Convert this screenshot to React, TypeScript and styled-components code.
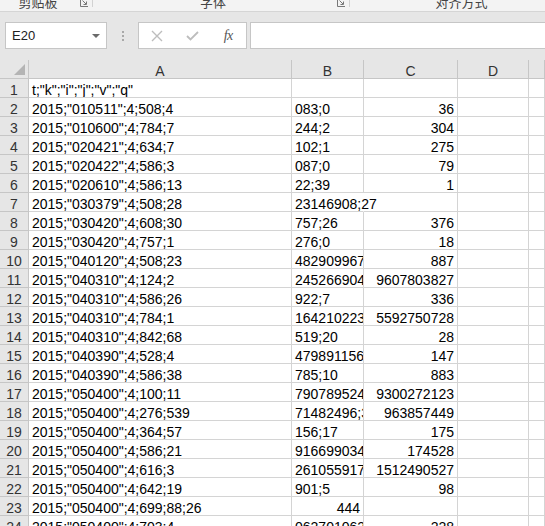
import styled, { createGlobalStyle } from 'styled-components';

const GlobalStyle = createGlobalStyle`
  html, body {
    margin: 0;
    padding: 0;
    background: #ffffff;
    overflow: hidden;
  }
  * {
    box-sizing: border-box;
  }
`;

const COLS = '29px 263px 72px 94px 71px 1fr';
const GRID = '#d4d4d4';
const HEAD_LINE = '#c6c6c6';

const Window = styled.div`
  width: 545px;
  height: 526px;
  overflow: hidden;
  font-family: 'Liberation Sans', Arial, sans-serif;
  color: #000;
`;

const Ribbon = styled.div`
  display: flex;
  height: 12px;
  background: #f3f3f3;
  border-bottom: 1px solid #d5d5d5;
  overflow: hidden;
`;

const Group = styled.div<{ $w: number }>`
  display: flex;
  align-items: flex-end;
  flex: none;
  width: ${(p) => p.$w}px;
  border-right: 1px solid #d2d2d2;
  height: 7px;
  align-self: flex-start;
  overflow: visible;
`;

const GroupLabel = styled.div`
  flex: 1;
  text-align: center;
  font-family: 'Noto Sans CJK SC', 'Liberation Sans', sans-serif;
  font-size: 13px;
  line-height: 13px;
  color: #444;
  margin-bottom: -1px;
  white-space: nowrap;
`;

const Launcher = styled.svg`
  flex: none;
  width: 8px;
  height: 8px;
  margin: 0 4px 0 4px;
`;

const FormulaBand = styled.div`
  display: flex;
  height: 48px;
  padding: 10px 0 11px 5px;
  background: #e6e6e6;
`;

const NameBox = styled.div`
  display: flex;
  align-items: center;
  width: 102px;
  flex: none;
  padding: 0 6px 0 6px;
  background: #fff;
  border: 1px solid #c6c6c6;
  font-size: 13px;
  color: #222;
`;

const Caret = styled.span`
  margin-left: auto;
  width: 0;
  height: 0;
  border-left: 4px solid transparent;
  border-right: 4px solid transparent;
  border-top: 4px solid #6a6a6a;
`;

const Dots = styled.div`
  display: flex;
  flex-direction: column;
  align-items: center;
  justify-content: center;
  gap: 2px;
  width: 31px;
  flex: none;

  span {
    width: 2px;
    height: 2px;
    background: #a8a8a8;
  }
`;

const ButtonBox = styled.div`
  display: flex;
  width: 109px;
  flex: none;
  background: #fff;
  border: 1px solid #c6c6c6;
`;

const Btn = styled.div`
  display: flex;
  align-items: center;
  justify-content: center;
  width: 36px;
  color: #bdbdbd;
`;

const Fx = styled.span`
  font-family: 'Liberation Serif', 'DejaVu Serif', serif;
  font-style: italic;
  font-size: 14px;
  color: #555;
  letter-spacing: -0.5px;
`;

const FormulaInput = styled.div`
  flex: 1;
  margin-left: 3px;
  margin-right: -2px;
  background: #fff;
  border: 1px solid #c6c6c6;
`;

const Row = styled.div`
  display: grid;
  grid-template-columns: ${COLS};
  height: 19px;
`;

const Corner = styled.div`
  display: flex;
  align-items: flex-end;
  justify-content: flex-end;
  padding: 0 3px 3px 0;
  background: #e6e6e6;
  border-right: 1px solid ${HEAD_LINE};
  border-bottom: 1px solid ${HEAD_LINE};
`;

const Triangle = styled.span`
  width: 0;
  height: 0;
  border-left: 11px solid transparent;
  border-bottom: 11px solid #b4b4b4;
`;

const HeadCell = styled.div`
  display: flex;
  align-items: flex-end;
  justify-content: center;
  background: #e6e6e6;
  border-right: 1px solid ${HEAD_LINE};
  border-bottom: 1px solid ${HEAD_LINE};
  font-size: 14px;
  line-height: 14px;
  color: #333;
`;

const RowNum = styled(HeadCell)`
  border-bottom-color: ${HEAD_LINE};
`;

const Cell = styled.div<{ $right?: boolean; $spill?: boolean }>`
  display: flex;
  align-items: flex-end;
  justify-content: ${(p) => (p.$right ? 'flex-end' : 'flex-start')};
  padding: 0 3px;
  border-right: 1px solid ${(p) => (p.$spill ? 'transparent' : GRID)};
  border-bottom: 1px solid ${GRID};
  overflow: ${(p) => (p.$spill ? 'visible' : 'hidden')};
  white-space: nowrap;
  font-size: 14px;
  line-height: 14px;
`;

type Line = { a: string; b?: string; bRight?: boolean; bSpill?: boolean; c?: string };

// B values longer than the column are clipped at its edge, as in the sheet
const rows: Line[] = [
  { a: 't;"k";"i";"j";"v";"q"' },
  { a: '2015;"010511";4;508;4', b: '083;0', c: '36' },
  { a: '2015;"010600";4;784;7', b: '244;2', c: '304' },
  { a: '2015;"020421";4;634;7', b: '102;1', c: '275' },
  { a: '2015;"020422";4;586;3', b: '087;0', c: '79' },
  { a: '2015;"020610";4;586;13', b: '22;39', c: '1' },
  { a: '2015;"030379";4;508;28', b: '23146908;27', bSpill: true },
  { a: '2015;"030420";4;608;30', b: '757;26', c: '376' },
  { a: '2015;"030420";4;757;1', b: '276;0', c: '18' },
  { a: '2015;"040120";4;508;23', b: '482909967', c: '887' },
  { a: '2015;"040310";4;124;2', b: '245266904', c: '9607803827' },
  { a: '2015;"040310";4;586;26', b: '922;7', c: '336' },
  { a: '2015;"040310";4;784;1', b: '164210223', c: '5592750728' },
  { a: '2015;"040310";4;842;68', b: '519;20', c: '28' },
  { a: '2015;"040390";4;528;4', b: '479891156', c: '147' },
  { a: '2015;"040390";4;586;38', b: '785;10', c: '883' },
  { a: '2015;"050400";4;100;11', b: '790789524', c: '9300272123' },
  { a: '2015;"050400";4;276;539', b: '71482496;3', c: '963857449' },
  { a: '2015;"050400";4;364;57', b: '156;17', c: '175' },
  { a: '2015;"050400";4;586;21', b: '916699034', c: '174528' },
  { a: '2015;"050400";4;616;3', b: '261055917', c: '1512490527' },
  { a: '2015;"050400";4;642;19', b: '901;5', c: '98' },
  { a: '2015;"050400";4;699;88;26', b: '444', bRight: true },
  { a: '2015;"050400";4;703;4', b: '062701062', c: '228' },
];

function LauncherIcon() {
  return (
    <Launcher viewBox='0 0 8 8'>
      <path d='M0.5 0 V7.5 H8' fill='none' stroke='#777' strokeWidth='1' />
      <path d='M2.5 1.5 L6 5' fill='none' stroke='#777' strokeWidth='1' />
      <path d='M3.5 5.5 H6.5 V2.5' fill='none' stroke='#777' strokeWidth='1' />
    </Launcher>
  );
}

function Sheet() {
  return (
    <>
      <Row>
        <Corner>
          <Triangle />
        </Corner>
        <HeadCell>A</HeadCell>
        <HeadCell>B</HeadCell>
        <HeadCell>C</HeadCell>
        <HeadCell>D</HeadCell>
        <HeadCell />
      </Row>
      {rows.map((r, i) => (
        <Row key={i}>
          <RowNum>{i + 1}</RowNum>
          <Cell>{r.a}</Cell>
          <Cell $right={r.bRight} $spill={r.bSpill}>
            {r.b}
          </Cell>
          <Cell $right>{r.c}</Cell>
          <Cell />
          <Cell />
        </Row>
      ))}
    </>
  );
}

export default function App() {
  return (
    <Window>
      <GlobalStyle />
      <Ribbon>
        <Group $w={93}>
          <GroupLabel>剪贴板</GroupLabel>
          <LauncherIcon />
        </Group>
        <Group $w={257}>
          <GroupLabel>字体</GroupLabel>
          <LauncherIcon />
        </Group>
        <Group $w={240}>
          <GroupLabel>对齐方式</GroupLabel>
          <LauncherIcon />
        </Group>
      </Ribbon>
      <FormulaBand>
        <NameBox>
          E20
          <Caret />
        </NameBox>
        <Dots>
          <span />
          <span />
          <span />
        </Dots>
        <ButtonBox>
          <Btn>
            <svg width='12' height='12' viewBox='0 0 12 12'>
              <path d='M1 1 L11 11 M11 1 L1 11' stroke='#bdbdbd' strokeWidth='1.4' />
            </svg>
          </Btn>
          <Btn>
            <svg width='13' height='10' viewBox='0 0 13 10'>
              <path d='M1 5 L4.5 8.5 L12 1' fill='none' stroke='#bdbdbd' strokeWidth='1.8' />
            </svg>
          </Btn>
          <Btn>
            <Fx>fx</Fx>
          </Btn>
        </ButtonBox>
        <FormulaInput />
      </FormulaBand>
      <Sheet />
    </Window>
  );
}
